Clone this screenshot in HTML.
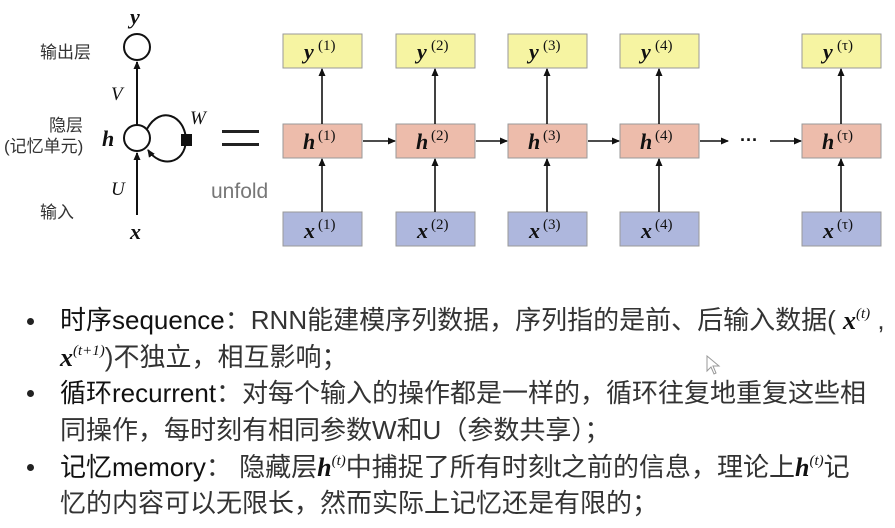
<!DOCTYPE html>
<html><head><meta charset="utf-8"><style>
body{margin:0;width:895px;height:528px;background:#fff;overflow:hidden;position:relative;font-family:"Liberation Sans","Noto Sans CJK SC",sans-serif}
svg{position:absolute;left:0;top:0}
.t{position:absolute;left:60px;font-size:26px;color:#333;white-space:nowrap;line-height:30px;height:30px}
.b{position:absolute;left:27px;width:7px;height:7px;border-radius:50%;background:#222}
.m{font-family:"Liberation Serif",serif;font-weight:bold;font-style:italic;color:#111}
.m sup{font-weight:normal;font-size:15px;font-style:italic;line-height:0;vertical-align:0;position:relative;top:-11px}
</style></head><body>
<svg width="895" height="290" viewBox="0 0 895 290">
<defs><marker id="a" markerWidth="8" markerHeight="8" refX="7" refY="4" orient="auto" markerUnits="userSpaceOnUse"><path d="M0,0.5 L8,4 L0,7.5z" fill="#111"/></marker></defs>
<g font-family="Liberation Sans,Noto Sans CJK SC,sans-serif" font-size="17" fill="#333">
<text x="40" y="58">输出层</text><text x="49" y="131">隐层</text><text x="4" y="152">(记忆单元)</text><text x="40" y="218">输入</text>
<text x="211" y="198" font-size="21" fill="#777">unfold</text></g>
<g font-family="Liberation Serif,serif" font-style="italic" fill="#111">
<text x="130" y="24" font-size="22" font-weight="bold">y</text>
<text x="102" y="146" font-size="22" font-weight="bold">h</text>
<text x="130" y="239" font-size="22" font-weight="bold">x</text>
<text x="111" y="100" font-size="19">V</text><text x="111" y="195" font-size="19">U</text><text x="190" y="124" font-size="19">W</text></g>
<g stroke="#111" stroke-width="2" fill="none">
<circle cx="137" cy="47" r="13" fill="#fff"/><circle cx="137" cy="138" r="13" fill="#fff"/>
<line x1="137" y1="125" x2="137" y2="62" marker-end="url(#a)"/>
<line x1="137" y1="215" x2="137" y2="153" marker-end="url(#a)"/>
<path d="M147,129 C160,105 185,115 186,140 C185,165 160,168 148,150" marker-end="url(#a)"/>
</g>
<rect x="181" y="134" width="11" height="12" fill="#111"/>
<rect x="222" y="130" width="37" height="3" fill="#222"/><rect x="222" y="143" width="37" height="3" fill="#222"/>
<g stroke="#999" stroke-width="1">
<g id="c">
<rect x="283" y="34" width="79" height="34" fill="#f6f4a2"/>
<rect x="283" y="124" width="79" height="34" fill="#edbcab"/>
<rect x="283" y="212" width="79" height="34" fill="#aeb7dd"/>
</g>
<use href="#c" x="113"/><use href="#c" x="225"/><use href="#c" x="337"/><use href="#c" x="519"/>
</g>
<g stroke="#111" stroke-width="1.6" marker-end="url(#a)">
<line x1="322" y1="124" x2="322" y2="69"/><line x1="322" y1="212" x2="322" y2="159"/>
<line x1="435" y1="124" x2="435" y2="69"/><line x1="435" y1="212" x2="435" y2="159"/>
<line x1="547" y1="124" x2="547" y2="69"/><line x1="547" y1="212" x2="547" y2="159"/>
<line x1="659" y1="124" x2="659" y2="69"/><line x1="659" y1="212" x2="659" y2="159"/>
<line x1="841" y1="124" x2="841" y2="69"/><line x1="841" y1="212" x2="841" y2="159"/>
<line x1="363" y1="141" x2="395" y2="141"/><line x1="476" y1="141" x2="507" y2="141"/>
<line x1="588" y1="141" x2="619" y2="141"/><line x1="700" y1="141" x2="728" y2="141"/>
<line x1="770" y1="141" x2="801" y2="141"/>
</g>
<text x="740" y="146" font-size="18" fill="#111" font-weight="bold">···</text>
<g font-family="Liberation Serif,serif" fill="#111" font-size="22">
<g font-weight="bold" font-style="italic">
<text x="304" y="59">y</text><text x="303" y="149">h</text><text x="304" y="238">x</text>
<text x="417" y="59">y</text><text x="416" y="149">h</text><text x="417" y="238">x</text>
<text x="529" y="59">y</text><text x="528" y="149">h</text><text x="529" y="238">x</text>
<text x="641" y="59">y</text><text x="640" y="149">h</text><text x="641" y="238">x</text>
<text x="823" y="59">y</text><text x="822" y="149">h</text><text x="823" y="238">x</text>
</g>
<g font-size="15">
<text x="318" y="50">(1)</text><text x="318" y="140">(1)</text><text x="318" y="229">(1)</text>
<text x="431" y="50">(2)</text><text x="431" y="140">(2)</text><text x="431" y="229">(2)</text>
<text x="543" y="50">(3)</text><text x="543" y="140">(3)</text><text x="543" y="229">(3)</text>
<text x="655" y="50">(4)</text><text x="655" y="140">(4)</text><text x="655" y="229">(4)</text>
<text x="837" y="50">(τ)</text><text x="837" y="140">(τ)</text><text x="837" y="229">(τ)</text>
</g></g>
</svg>
<div class="b" style="top:318px"></div><div class="b" style="top:390px"></div><div class="b" style="top:464px"></div>
<div class="t" style="top:305px"><span style="color:#111">时序sequence</span>：RNN能建模序列数据，序列指的是前、后输入数据( <span class="m">x<sup>(t)</sup></span> ,</div>
<div class="t" style="top:342px"><span class="m">x<sup>(t+1)</sup></span>)不独立，相互影响；</div>
<div class="t" style="top:378px"><span style="color:#111">循环recurrent</span>：对每个输入的操作都是一样的，循环往复地重复这些相</div>
<div class="t" style="top:415px">同操作，每时刻有相同参数W和U（参数共享）；</div>
<div class="t" style="top:452px"><span style="color:#111">记忆memory</span>： 隐藏层<span class="m">h<sup>(t)</sup></span>中捕捉了所有时刻t之前的信息，理论上<span class="m">h<sup>(t)</sup></span>记</div>
<div class="t" style="top:488px">忆的内容可以无限长，然而实际上记忆还是有限的；</div>
<svg style="left:706px;top:355px" width="16" height="22"><path d="M1,1 L1,16 L5,12 L8,19 L10,18 L7,11 L13,11z" fill="#fff" stroke="#999"/></svg>
</body></html>
